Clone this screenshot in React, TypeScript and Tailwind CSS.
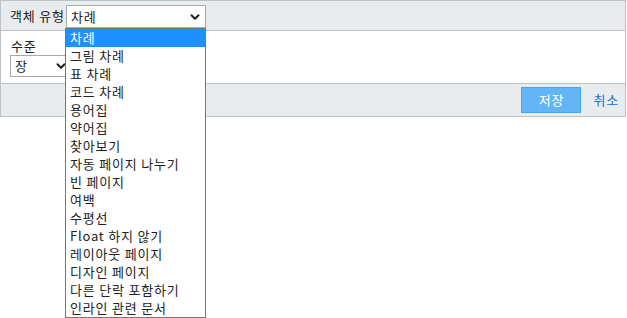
import { ChevronDown } from "lucide-react";

const options = [
  "차례",
  "그림 차례",
  "표 차례",
  "코드 차례",
  "용어집",
  "약어집",
  "찾아보기",
  "자동 페이지 나누기",
  "빈 페이지",
  "여백",
  "수평선",
  "Float 하지 않기",
  "레이아웃 페이지",
  "디자인 페이지",
  "다른 단락 포함하기",
  "인라인 관련 문서",
];

const font = { fontFamily: '"Noto Sans CJK KR", "Noto Sans", sans-serif' };

export default function App() {
  return (
    <div className="relative w-[627px] h-[318px] bg-white text-[13px] tracking-[0.8px] text-[#222]" style={font}>
      <div className="w-[626px] border border-[#bcc3c7]">
        <div className="h-[30px] bg-[#e9ecef] border-b border-[#bcc3c7] flex items-center pl-[9px]">
          <span className="w-[56px] leading-none whitespace-nowrap">객체 유형</span>
          <div className="w-[140px] h-[23px] border border-[#a9a9a9] bg-white flex items-center justify-between pl-[4px] pr-[3px] mt-[2px]">
            <span>차례</span>
            <ChevronDown className="w-[14px] h-[14px]" strokeWidth={3.5} />
          </div>
        </div>
        <div className="h-[52px] bg-white pl-[9px] pt-[6px]">
          <div className="leading-[18px] pl-[1px]">수준</div>
          <div className="w-[62px] h-[22px] border border-[#a9a9a9] bg-white flex items-center justify-between pl-[4px] pr-[3px]">
            <span>장</span>
            <ChevronDown className="w-[14px] h-[14px]" strokeWidth={3.5} />
          </div>
        </div>
        <div className="h-[33px] bg-[#e9ecef] border-t border-[#bcc3c7] flex items-center justify-end pr-[6px] gap-[12px]">
          <button className="w-[60px] h-[26px] bg-[#64b5f6] border border-[#42a5f5] text-white">
            저장
          </button>
          <a className="text-[#1a6fd8]">취소</a>
        </div>
      </div>
      <div className="absolute left-[65px] top-[28px] w-[141px] border border-[#767676] bg-white">
        {options.map((o, i) => (
          <div
            key={o}
            className={
              i === 0
                ? "h-[18px] leading-[18px] px-[4px] bg-[#1e90ff] text-white whitespace-nowrap"
                : "h-[18px] leading-[18px] px-[4px] whitespace-nowrap"
            }
          >
            {o}
          </div>
        ))}
      </div>
    </div>
  );
}
